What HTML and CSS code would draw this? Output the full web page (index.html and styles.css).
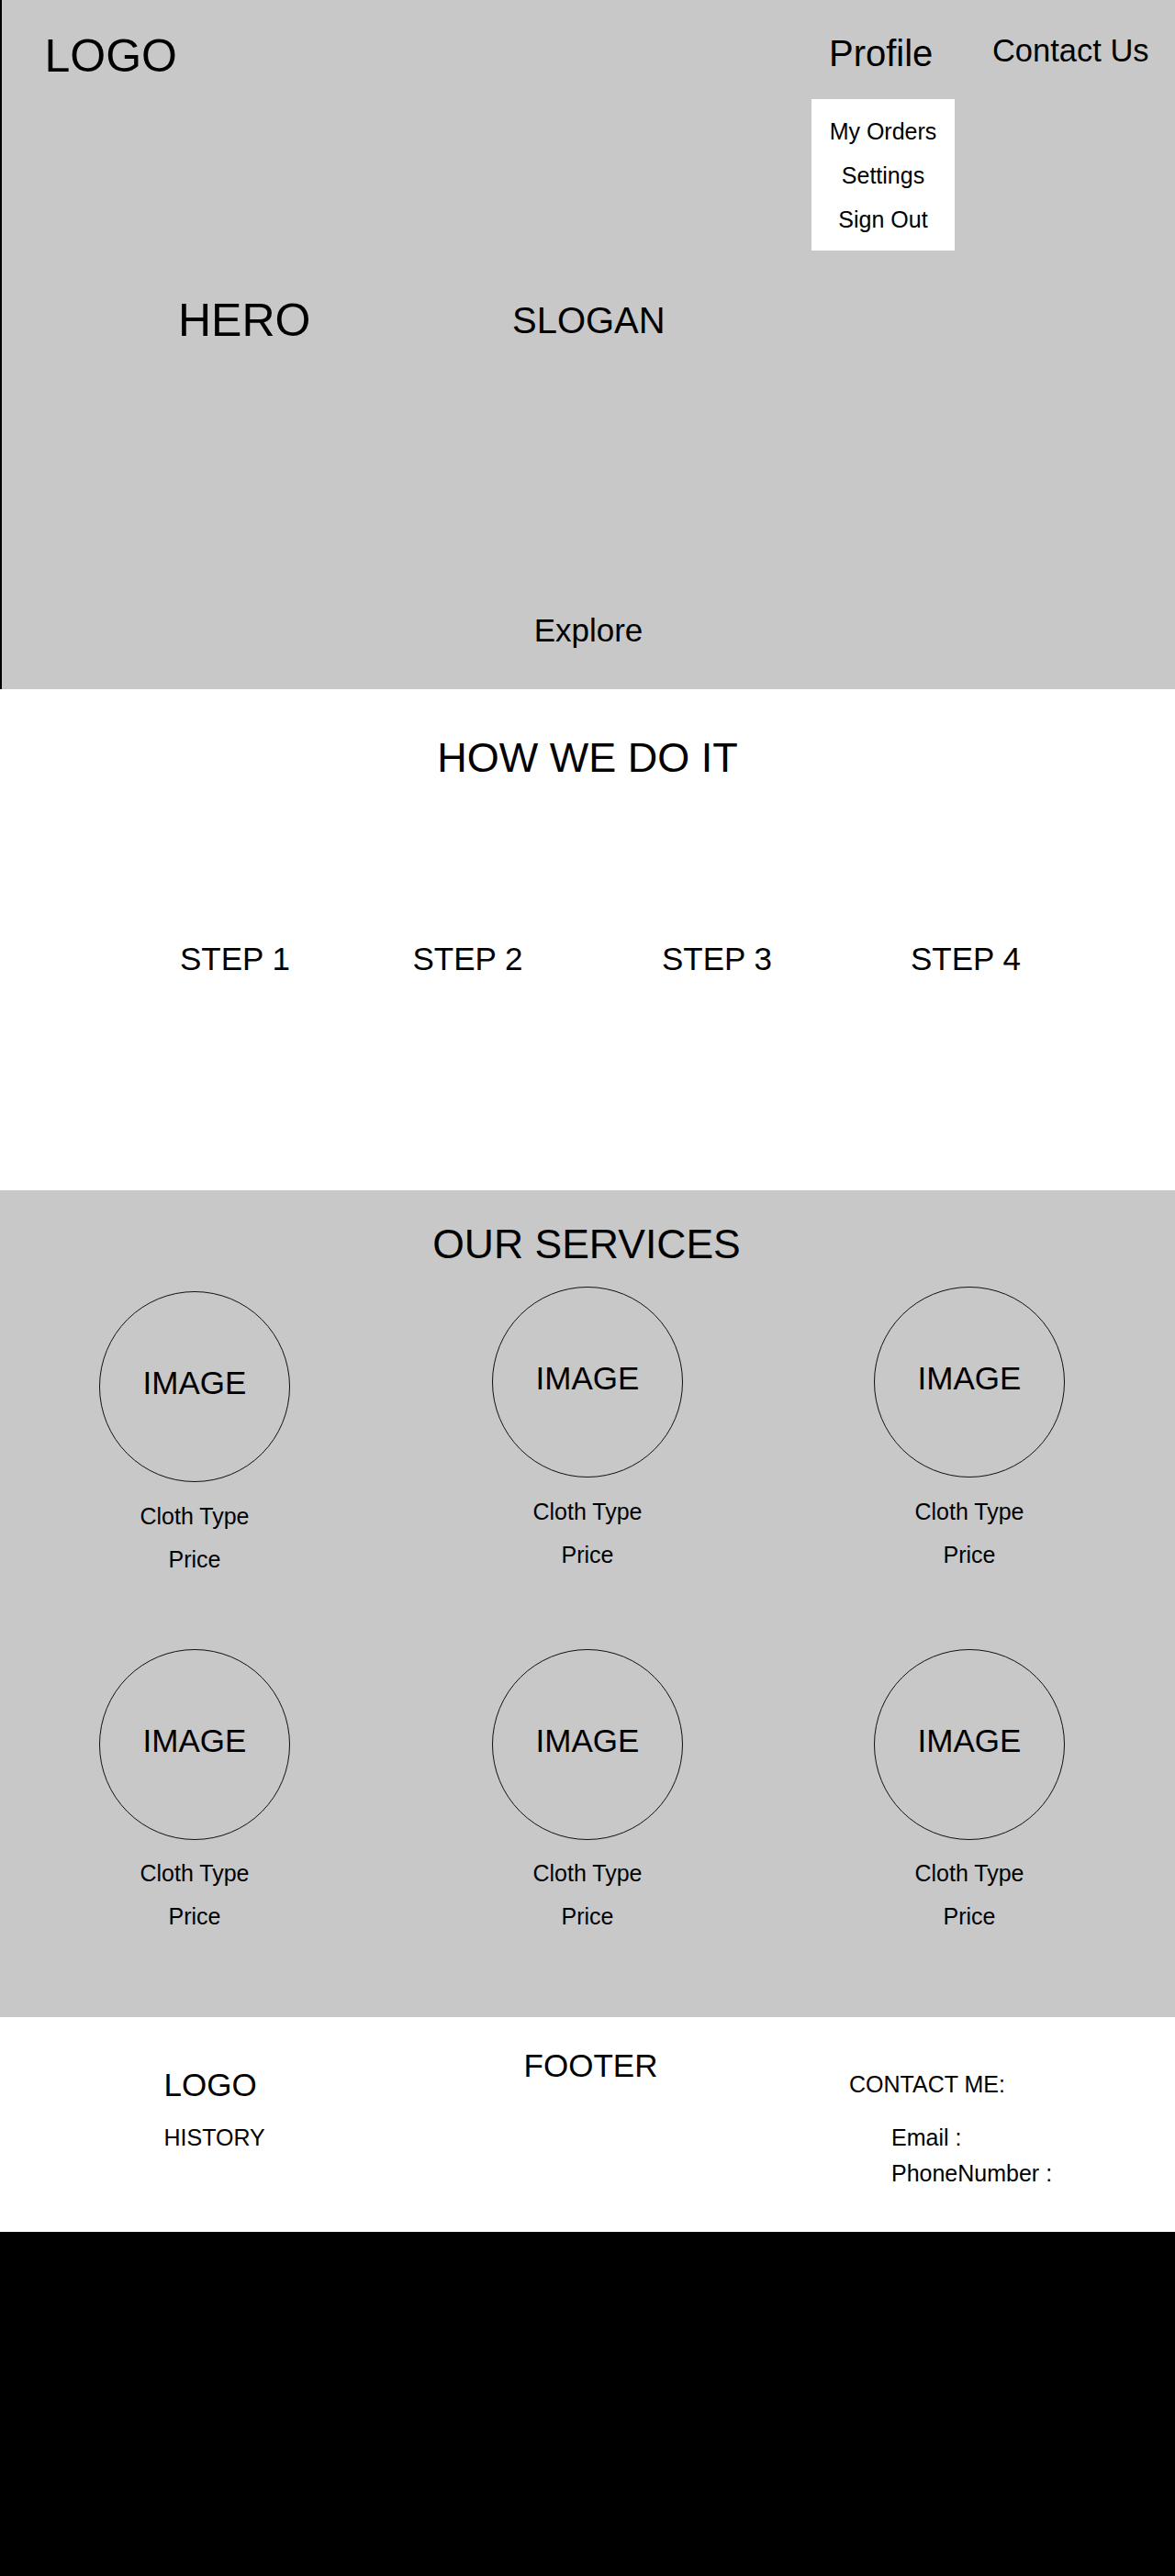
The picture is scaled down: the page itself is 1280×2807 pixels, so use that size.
FILE: index.html
```html
<!DOCTYPE html>
<html lang="en">
<head>
<meta charset="utf-8">
<title>Wireframe</title>
<link rel="stylesheet" href="styles.css">
</head>
<body>
<header class="hero">
  <div class="topbar">
    <div class="logo">LOGO</div>
    <nav class="nav">
      <div class="profile">
        <a class="nav-link nav-link--profile" href="#">Profile</a>
        <ul class="dropdown">
          <li>My Orders</li>
          <li>Settings</li>
          <li>Sign Out</li>
        </ul>
      </div>
      <a class="nav-link nav-link--contact" href="#">Contact Us</a>
    </nav>
  </div>
  <div class="hero-row">
    <h1 class="hero-title">HERO</h1>
    <p class="hero-slogan">SLOGAN</p>
  </div>
  <a class="explore" href="#">Explore</a>
</header>

<section class="how">
  <h2 class="section-title section-title--how">HOW WE DO IT</h2>
  <div class="steps">
    <div class="step">STEP 1</div>
    <div class="step">STEP 2</div>
    <div class="step">STEP 3</div>
    <div class="step">STEP 4</div>
  </div>
</section>

<section class="services">
  <h2 class="section-title section-title--services">OUR SERVICES</h2>
  <div class="service-grid">
    <div class="service service--low">
      <div class="circle">IMAGE</div>
      <div class="service-text"><p>Cloth Type</p><p>Price</p></div>
    </div>
    <div class="service">
      <div class="circle">IMAGE</div>
      <div class="service-text"><p>Cloth Type</p><p>Price</p></div>
    </div>
    <div class="service">
      <div class="circle">IMAGE</div>
      <div class="service-text"><p>Cloth Type</p><p>Price</p></div>
    </div>
    <div class="service">
      <div class="circle">IMAGE</div>
      <div class="service-text"><p>Cloth Type</p><p>Price</p></div>
    </div>
    <div class="service">
      <div class="circle">IMAGE</div>
      <div class="service-text"><p>Cloth Type</p><p>Price</p></div>
    </div>
    <div class="service">
      <div class="circle">IMAGE</div>
      <div class="service-text"><p>Cloth Type</p><p>Price</p></div>
    </div>
  </div>
</section>

<footer class="footer">
  <div class="footer-brand">
    <div class="footer-logo">LOGO</div>
    <p class="footer-history">HISTORY</p>
  </div>
  <div class="footer-title">FOOTER</div>
  <div class="footer-contact">
    <p class="contact-heading">CONTACT ME:</p>
    <ul class="contact-list">
      <li class="contact-email">Email :</li>
      <li class="contact-phone">PhoneNumber :</li>
    </ul>
  </div>
</footer>
</body>
</html>
```

FILE: styles.css
```css
* {
  box-sizing: border-box;
}

html,
body {
  margin: 0;
  padding: 0;
}

body {
  background: #000;
  font-family: "Liberation Sans", Arial, sans-serif;
  color: #000;
  line-height: 1;
}

h1,
h2,
p,
ul {
  margin: 0;
  padding: 0;
  font-weight: normal;
}

ul {
  list-style: none;
}

a {
  color: inherit;
  text-decoration: none;
}

/* ---------- HERO ---------- */
.hero {
  background: #c8c8c8;
  border-left: 2px solid #000;
  height: 751px;
  padding-top: 38px;
  display: flex;
  flex-direction: column;
}

.topbar {
  display: flex;
  justify-content: space-between;
  align-items: flex-start;
  padding-left: 46.5px;
  padding-right: 28.4px;
}

.logo {
  font-size: 50px;
  line-height: 47px;
}

.nav {
  display: flex;
  align-items: flex-start;
  gap: 64.6px;
}

.profile {
  position: relative;
}

.nav-link {
  display: block;
}

.nav-link--profile {
  font-size: 40px;
}

.nav-link--contact {
  font-size: 34.5px;
}

.dropdown {
  position: absolute;
  top: 70px;
  left: -19px;
  width: 156px;
  background: #fff;
  padding: 11.3px 0 9.4px;
  text-align: center;
  font-size: 25px;
}

.dropdown li {
  line-height: 48px;
}

.hero-row {
  display: flex;
  align-items: center;
  margin-top: 238.5px;
  padding-left: 192px;
  gap: 219.5px;
}

.hero-title {
  font-size: 50px;
}

.hero-slogan {
  font-size: 40px;
}

.explore {
  align-self: center;
  margin-top: 295.4px;
  font-size: 35px;
}

/* ---------- HOW WE DO IT ---------- */
.how {
  background: #fff;
  height: 546px;
  padding-top: 52px;
}

.section-title {
  text-align: center;
}

.section-title--how {
  font-size: 45px;
}

.steps {
  display: grid;
  grid-template-columns: 253.5px 271.5px 271px auto;
  padding-left: 196px;
  margin-top: 178.5px;
  font-size: 35px;
}

/* ---------- SERVICES ---------- */
.services {
  background: #c8c8c8;
  height: 901px;
  padding-top: 37.3px;
}

.section-title--services {
  font-size: 44.5px;
  padding-right: 2px;
}

.service-grid {
  display: grid;
  grid-template-columns: 424px 432px 400px;
  row-gap: 74px;
  margin-top: 23.2px;
  align-items: start;
}

.service {
  display: flex;
  flex-direction: column;
  align-items: center;
}

.service--low {
  margin-top: 5px;
}

.circle {
  width: 208px;
  height: 208px;
  border: 1px solid #111;
  border-radius: 50%;
  padding-top: 81.4px;
  text-align: center;
  font-size: 35px;
}

.service-text {
  margin-top: 13.6px;
  font-size: 25px;
  line-height: 47px;
  text-align: center;
}

/* ---------- FOOTER ---------- */
.footer {
  background: #fff;
  height: 234px;
  padding-top: 35.4px;
  padding-left: 178.5px;
  display: grid;
  grid-template-columns: 392.1px 354.4px auto;
  align-items: start;
}

.footer-brand {
  margin-top: 21px;
}

.footer-logo {
  font-size: 35px;
}

.footer-history {
  margin-top: 27.4px;
  font-size: 25px;
}

.footer-title {
  font-size: 35px;
}

.footer-contact {
  margin-top: 25.4px;
}

.contact-heading {
  font-size: 25px;
}

.contact-list {
  margin-top: 33px;
  padding-left: 46px;
  font-size: 25px;
}

.contact-phone {
  margin-top: 14px;
}
```
